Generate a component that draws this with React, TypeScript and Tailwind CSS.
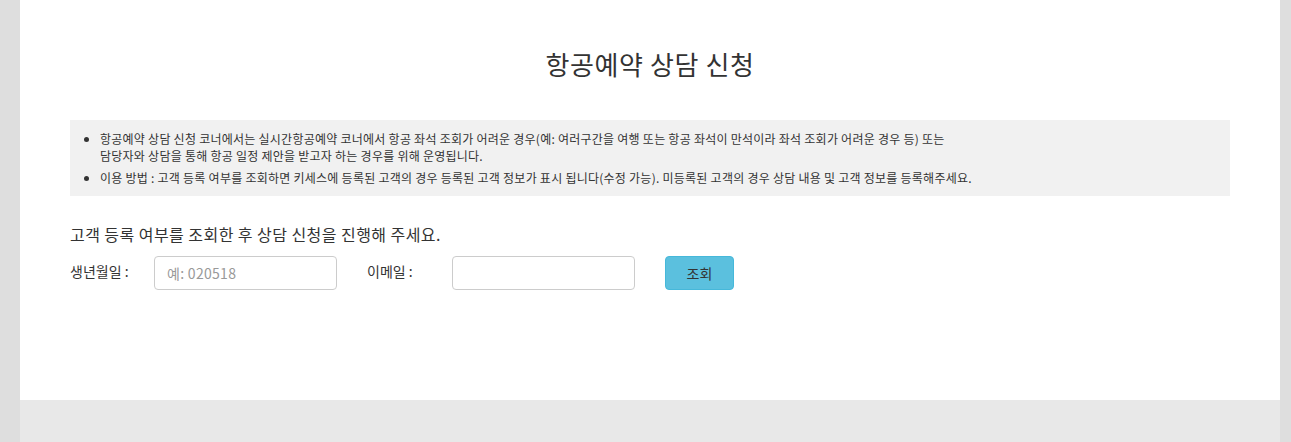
const App = () => {
  return (
    <div
      className="min-h-[442px] bg-[#dedede] pl-[20px]"
      style={{ fontFamily: '"Noto Sans CJK KR", "Noto Sans", sans-serif' }}
    >
      <div className="h-[400px] w-[1260px] bg-white px-[50px] pt-[44px]">
        <h1 className="text-center text-[26px] leading-[40px] tracking-[0.6px] text-[#333]">항공예약 상담 신청</h1>

        <div className="mt-[36px] bg-[#f1f1f1] pb-[10px] pl-[30px] pr-[10px] pt-[10px] text-[12px] tracking-[0.25px] text-[#333]">
          <ul className="list-disc">
            <li className="leading-[17px]">
              항공예약 상담 신청 코너에서는 실시간항공예약 코너에서 항공 좌석 조회가 어려운 경우(예: 여러구간을 여행 또는 항공 좌석이 만석이라 좌석 조회가 어려운 경우 등) 또는
              <br />
              담당자와 상담을 통해 항공 일정 제안을 받고자 하는 경우를 위해 운영됩니다.
            </li>
            <li className="mt-[5px] leading-[17px]">
              이용 방법 : 고객 등록 여부를 조회하면 키세스에 등록된 고객의 경우 등록된 고객 정보가 표시 됩니다(수정 가능). 미등록된 고객의 경우 상담 내용 및 고객 정보를 등록해주세요.
            </li>
          </ul>
        </div>

        <p className="mt-[27px] text-[16px] leading-[22px] tracking-[0.45px] text-[#333]">고객 등록 여부를 조회한 후 상담 신청을 진행해 주세요.</p>

        <div className="mt-[11px] flex items-center text-[14px] text-[#333]">
          <label className="-mt-[4px] w-[84px]">생년월일 :</label>
          <input
            className="h-[34px] w-[183px] rounded-[4px] border border-[#ccc] px-[12px] text-[14px] tracking-[0.3px] outline-none placeholder:text-[#999]"
            placeholder="예: 020518"
          />
          <label className="-mt-[4px] ml-[30px] w-[85px]">이메일 :</label>
          <input className="h-[34px] w-[183px] rounded-[4px] border border-[#ccc] px-[12px] text-[14px] outline-none" />
          <button className="ml-[30px] h-[34px] w-[69px] rounded-[4px] border border-[#46b8da] bg-[#5bc0de] text-[14px] text-[#333]">
            조회
          </button>
        </div>
      </div>
      <div className="h-[42px] w-[1260px] bg-[#e8e8e8]" />
    </div>
  );
};

export default App;
